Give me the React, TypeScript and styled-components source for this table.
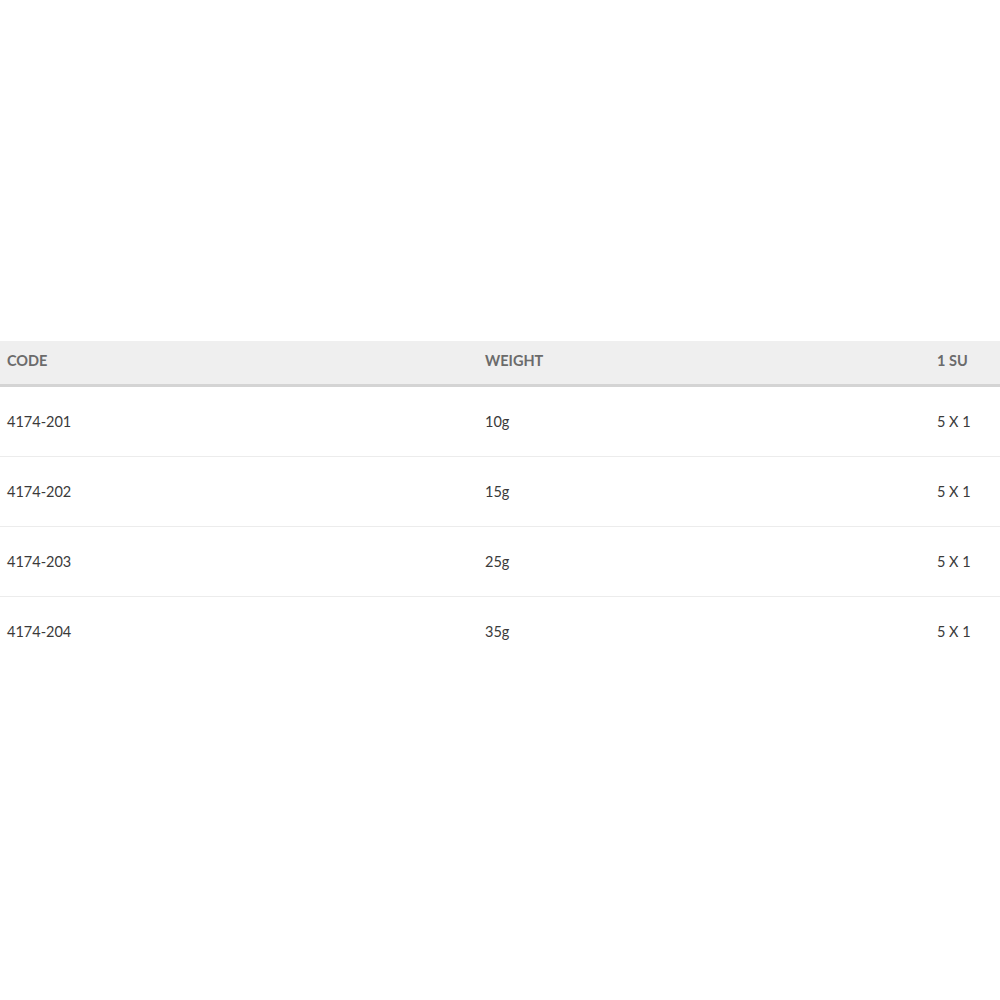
import React from "react";
import styled, { createGlobalStyle } from "styled-components";

const rows = [
  { code: "4174-201", weight: "10g", su: "5 X 1" },
  { code: "4174-202", weight: "15g", su: "5 X 1" },
  { code: "4174-203", weight: "25g", su: "5 X 1" },
  { code: "4174-204", weight: "35g", su: "5 X 1" },
];

const App = () => {
  return (
    <>
      <GlobalStyle />
      <Page>
        <Table>
          <HeadRow>
            <HeadCell>CODE</HeadCell>
            <HeadCell>WEIGHT</HeadCell>
            <HeadCell>1 SU</HeadCell>
          </HeadRow>
          {rows.map((r, i) => (
            <BodyRow key={r.code} last={i === rows.length - 1}>
              <Cell>{r.code}</Cell>
              <Cell>{r.weight}</Cell>
              <Cell>{r.su}</Cell>
            </BodyRow>
          ))}
        </Table>
      </Page>
    </>
  );
};

// Styled Components

const GlobalStyle = createGlobalStyle`
  html, body {
    margin: 0;
    padding: 0;
    background: #ffffff;
  }
  body {
    font-family: Lato, "Open Sans", "Liberation Sans", sans-serif;
  }
`;

const Page = styled.div`
  width: 1000px;
  height: 1000px;
  padding-top: 341px;
  box-sizing: border-box;
`;

const Table = styled.div`
  width: 100%;
`;

const HeadRow = styled.div`
  display: grid;
  grid-template-columns: 478px 452px 70px;
  align-items: center;
  height: 43px;
  background: #efefef;
  border-bottom: 3px solid #d4d4d4;
`;

const HeadCell = styled.div`
  padding-left: 7px;
  padding-bottom: 4px;
  font-size: 14.5px;
  font-weight: 700;
  color: #6b6b6b;
`;

const BodyRow = styled.div<{ last?: boolean }>`
  display: grid;
  grid-template-columns: 478px 452px 70px;
  align-items: center;
  height: 69px;
  border-bottom: ${(p) => (p.last ? "none" : "1px solid #ececec")};
`;

const Cell = styled.div`
  padding-left: 7px;
  font-size: 14.5px;
  color: #3a3a3a;
`;

export default App;
